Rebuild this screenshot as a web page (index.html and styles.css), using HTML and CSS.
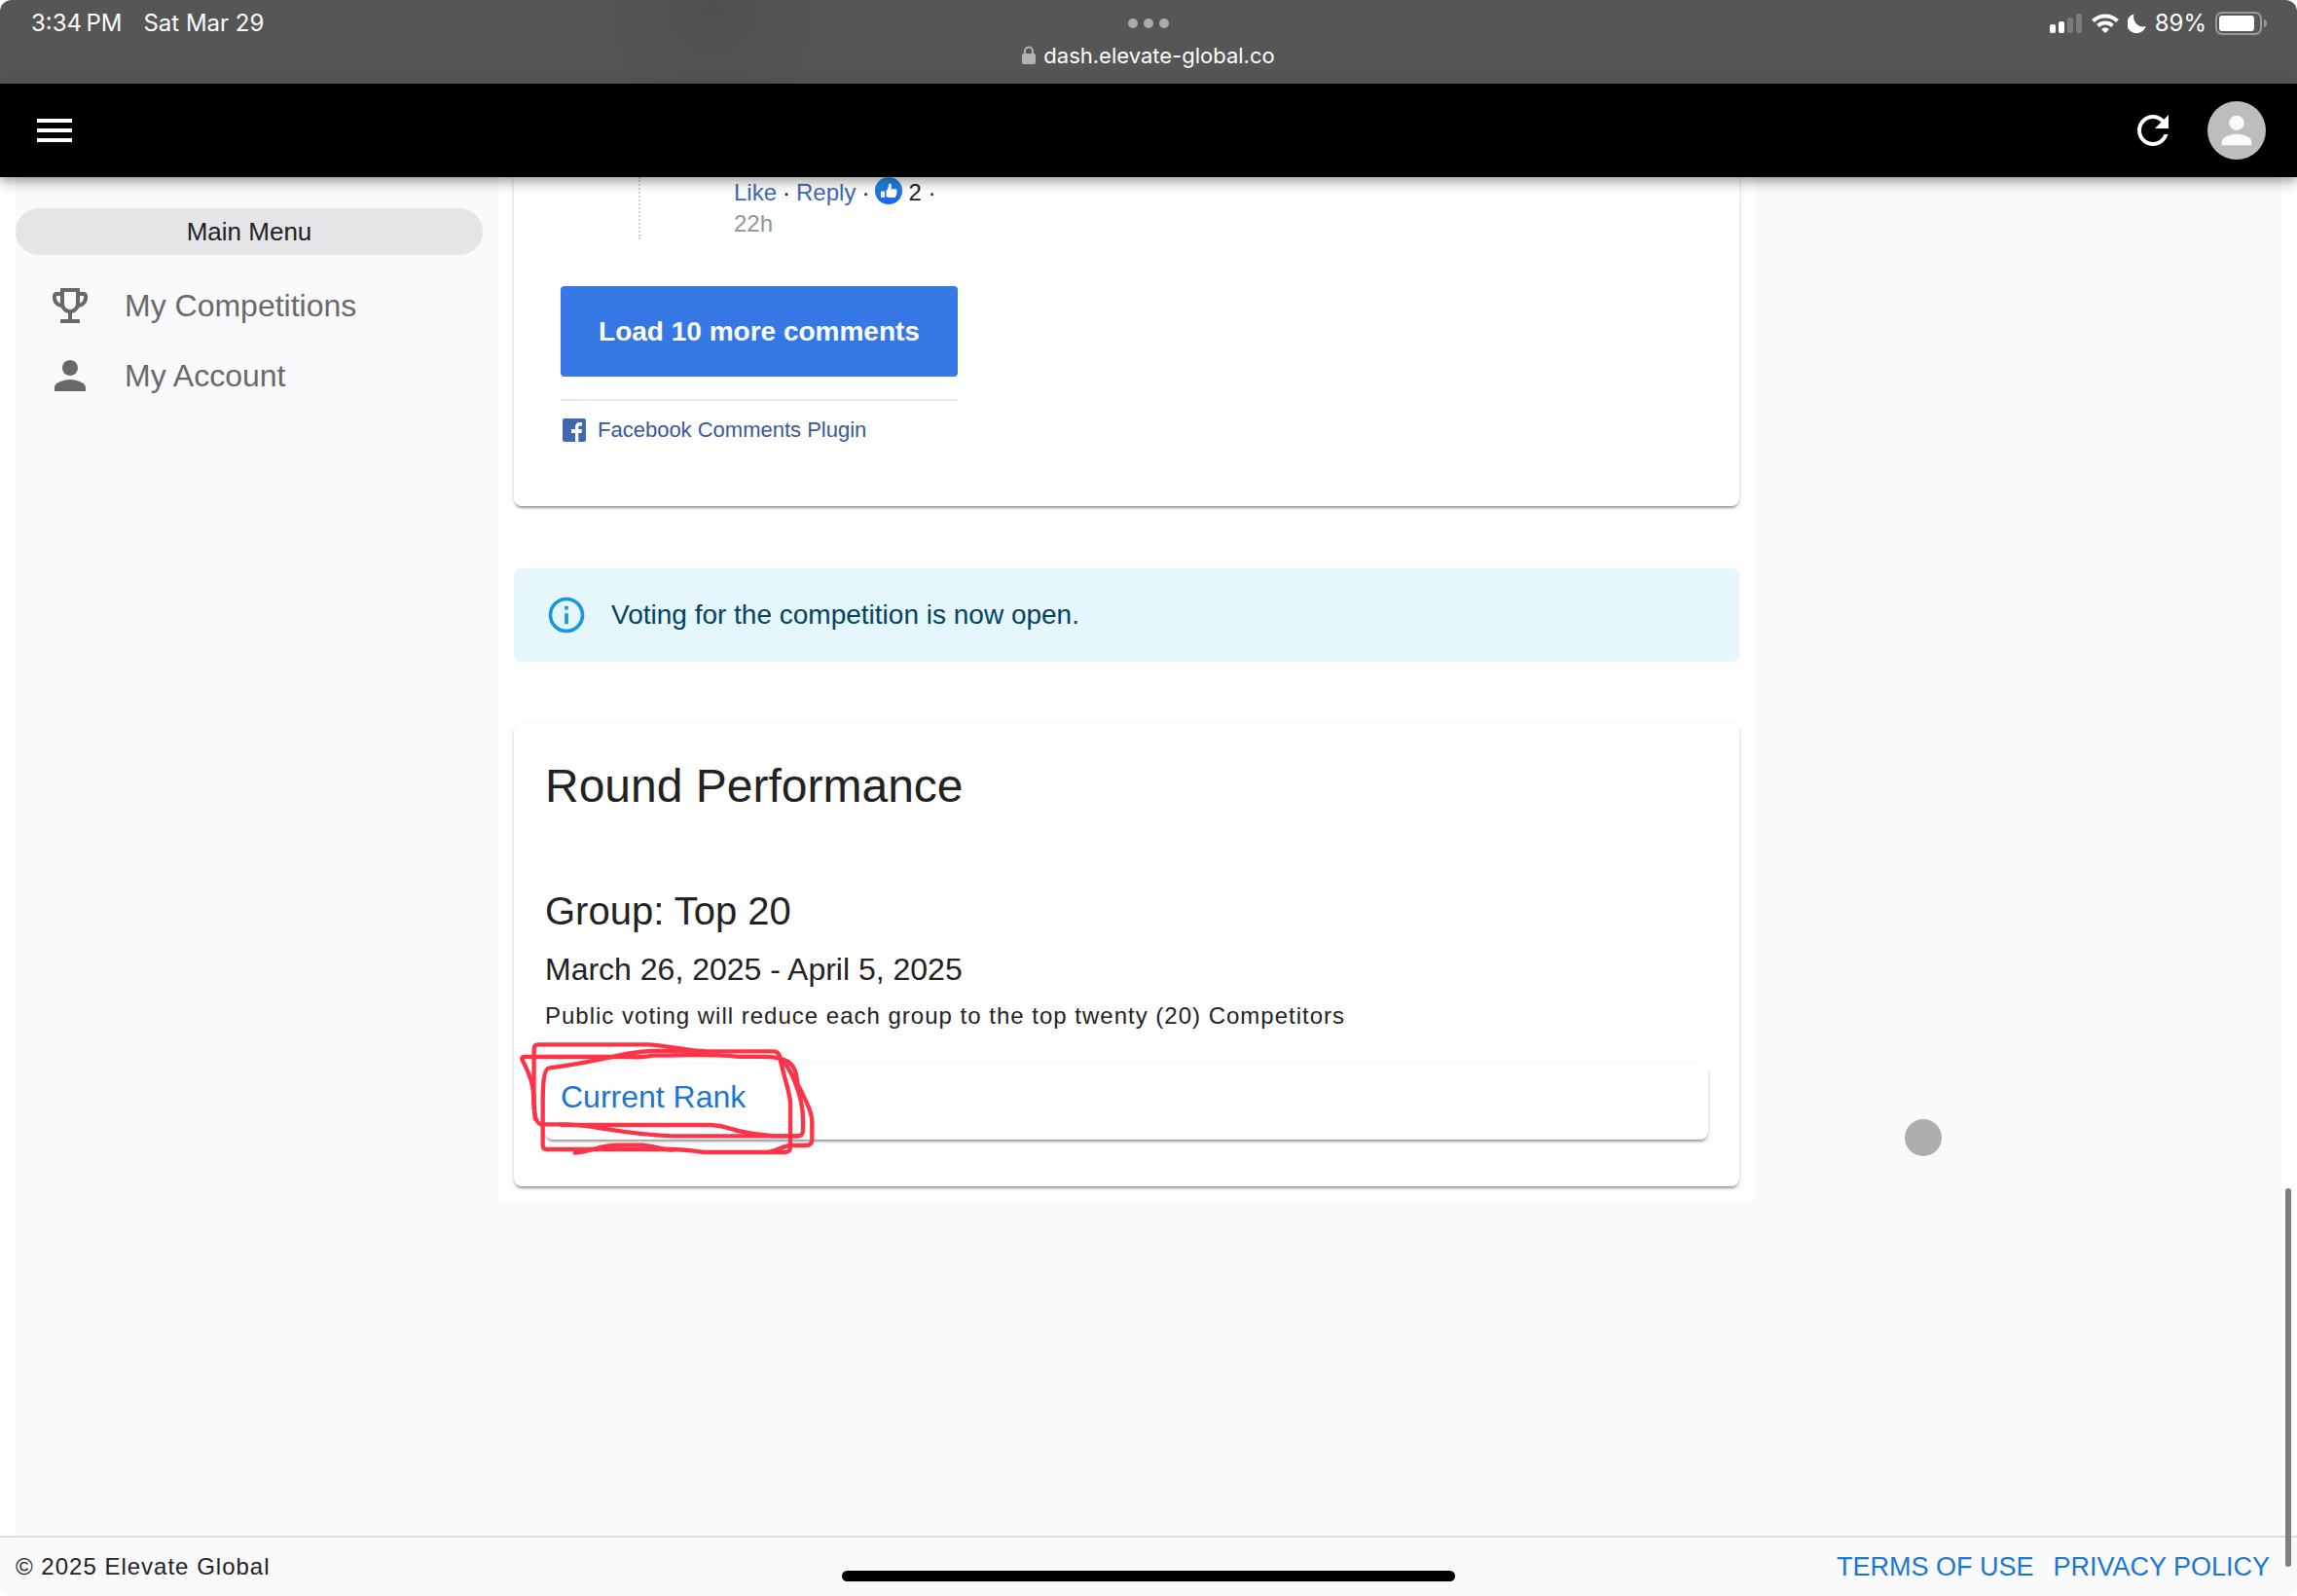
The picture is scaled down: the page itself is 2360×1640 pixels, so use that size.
FILE: index.html
```html
<!DOCTYPE html>
<html lang="en">
<head>
    <meta charset="UTF-8">
    <meta name="viewport" content="width=device-width, initial-scale=1.0">
    <title>Elevate Global</title>
    <link rel="stylesheet" href="styles.css">
</head>
<body>

    <div class="status-bar">
        <div class="status-left">
            <span>3:34&#8201;PM</span>
            <span>Sat Mar 29</span>
        </div>
        <div class="status-center">
            <div class="dots"><i></i><i></i><i></i></div>
            <div class="address">
                <svg class="lock" width="14" height="20" viewBox="0 0 14 20"><path d="M3 10V5.500a4 4 0 0 1 8 0V10" fill="none" stroke="#b3b2ba" stroke-width="2"/><rect y="8" width="14" height="11" rx="2" fill="#b3b2ba"/></svg>
                <span>dash.elevate-global.co</span>
            </div>
        </div>
        <div class="status-right">
            <svg width="34" height="20" viewBox="0 0 34 20" fill="#fff"><rect y="11" width="6" height="9" rx="2"/><rect x="9" y="8" width="6" height="12" rx="2"/><rect x="18" y="4" width="6" height="16" rx="2" fill="#7b7b7b"/><rect x="27" width="6" height="20" rx="2" fill="#7b7b7b"/></svg>
            <svg width="28" height="20" viewBox="0 0 28 20" fill="none" stroke="#fff" stroke-width="4"><path d="M1.500 7.500a18 18 0 0 1 25 0"/><path d="M6.500 12.500a11 11 0 0 1 15 0"/><path d="M14 20l-4-4a5.600 5.600 0 0 1 8 0z" fill="#fff" stroke="none"/></svg>
            <svg class="moon" width="19" height="20" viewBox="0 0 19 20" fill="#fff"><path d="M6.500 0.500A10 10 0 0 0 18.800 13 10 10 0 1 1 6.500 .500z"/></svg>
            <span>89%</span>
            <svg class="battery" width="54" height="24" viewBox="0 0 54 24"><rect x="1" y="1" width="46" height="22" rx="6" fill="none" stroke="#9a9a9a" stroke-width="2"/><rect x="4" y="4" width="36" height="16" rx="3" fill="#fff"/><path d="M50 8c4 1 4 7 0 8z" fill="#9a9a9a"/></svg>
        </div>
    </div>

    <header class="app-bar">
        <button class="icon-button" aria-label="Menu">
            <svg class="icon" viewBox="0 0 24 24"><path d="M3 18h18v-2H3v2zm0-5h18v-2H3v2zm0-7v2h18V6H3z"/></svg>
        </button>
        <div class="app-actions">
            <button class="icon-button" aria-label="Refresh">
                <svg class="icon" viewBox="0 0 24 24"><path d="M17.650 6.350C16.200 4.900 14.210 4 12 4c-4.420 0-7.990 3.580-7.990 8s3.570 8 7.990 8c3.730 0 6.840-2.550 7.730-6h-2.080c-.820 2.330-3.040 4-5.650 4-3.310 0-6-2.690-6-6s2.690-6 6-6c1.660 0 3.140.690 4.220 1.780L13 11h7V4l-2.350 2.350z"/></svg>
            </button>
            <button class="avatar" aria-label="Profile">
                <svg viewBox="0 0 24 24"><path d="M12 12c2.210 0 4-1.790 4-4s-1.790-4-4-4-4 1.790-4 4 1.790 4 4 4zm0 2c-2.670 0-8 1.340-8 4v2h16v-2c0-2.660-5.330-4-8-4z"/></svg>
            </button>
        </div>
    </header>

    <div class="content">
        <nav class="sidebar">
            <div class="menu-title">Main Menu</div>
            <a class="menu-item" href="#">
                <svg class="icon" viewBox="0 0 24 24"><path d="M19 5h-2V3H7v2H5c-1.100 0-2 .9-2 2v1c0 2.550 1.920 4.630 4.390 4.940.630 1.500 1.980 2.630 3.610 2.960V19H7v2h10v-2h-4v-3.100c1.630-.330 2.980-1.460 3.610-2.960C19.080 12.630 21 10.550 21 8V7c0-1.100-.9-2-2-2zM5 8V7h2v3.820C5.840 10.400 5 9.300 5 8zm7 6c-1.650 0-3-1.350-3-3V5h6v6c0 1.650-1.350 3-3 3zm7-6c0 1.300-.840 2.400-2 2.820V7h2v1z"/></svg>
                My Competitions
            </a>
            <a class="menu-item" href="#">
                <svg class="icon" viewBox="0 0 24 24"><path d="M12 12c2.210 0 4-1.790 4-4s-1.790-4-4-4-4 1.790-4 4 1.790 4 4 4zm0 2c-2.670 0-8 1.340-8 4v2h16v-2c0-2.660-5.330-4-8-4z"/></svg>
                My Account
            </a>
        </nav>

        <main class="main-panel">
            <section class="card comments-card">
                <div class="comments">
                    <div class="reply">
                        <div class="reply-meta">
                            <a href="#">Like</a> · <a href="#">Reply</a> ·
                            <svg class="thumb" viewBox="0 0 28 28">
                                <defs><linearGradient id="like" x1="0" y1="0" x2="0" y2="1"><stop offset="0" stop-color="#2b8fdc"/><stop offset="1" stop-color="#1463f3"/></linearGradient></defs>
                                <circle cx="14" cy="14" r="14" fill="url(#like)"/>
                                <path d="M6 15.500q0-1 1-1h2q1 0 1 1V21H7q-1 0-1-1zM11.500 14c1.800-1.500 2.200-3 2.400-6 .1-2 3.100-2 3.100 1 0 1.300-.2 2.200-.5 3.200H21c1.500 0 2 1.500 1.200 2.400.6.800.5 1.700-.2 2.400.4.900 0 1.700-.7 2.200 0 1.300-.7 1.900-2.200 1.900h-3.600c-1.700 0-2.800-.5-4-1z" fill="#fff"/>
                            </svg>
                            2 ·
                        </div>
                        <div class="reply-time">22h</div>
                    </div>
                    <button class="load-more">Load 10 more comments</button>
                    <a class="plugin" href="#">
                        <svg class="fb" viewBox="0 0 24 24"><rect width="24" height="24" rx="2" fill="#4267b2"/><path d="M13 24v-9H9v-4h4V9c0-3.500 2-5 4.500-5H20v3.500h-2c-1.300 0-1.700.6-1.700 1.800V11H20l-.5 4h-3.200v9z" fill="#fff"/></svg>
                        Facebook Comments Plugin
                    </a>
                </div>
            </section>

            <div class="alert" role="alert">
                <svg class="alert-icon" viewBox="0 0 24 24"><path d="M11 7h2v2h-2zm0 4h2v6h-2zm1-9C6.480 2 2 6.480 2 12s4.480 10 10 10 10-4.480 10-10S17.520 2 12 2zm0 18c-4.410 0-8-3.590-8-8s3.590-8 8-8 8 3.590 8 8-3.590 8-8 8z"/></svg>
                Voting for the competition is now open.
            </div>

            <section class="card round-card">
                <h1>Round Performance</h1>
                <h2>Group: Top 20</h2>
                <p class="dates">March 26, 2025 - April 5, 2025</p>
                <p class="caption">Public voting will reduce each group to the top twenty (20) Competitors</p>
                <div class="card rank-card">
                    <a href="#">Current Rank</a>
                    <svg class="scribble" viewBox="0 0 1080 600">
                        <path d="M440 108H86Q76 108 80 118C112 180 115 205 115 250Q118 316 140 316H215C300 318 380 345 540 352H925Q945 354 945 335V300C945 230 905 130 870 112C830 104 790 110 740 107C680 98 560 104 480 104Q460 109 420 109"/>
                        <path d="M120 300C113 260 116 200 116 85Q116 70 128 70H470C530 74 590 88 640 91H855Q870 91 874 110C880 150 906 220 906 250V385Q906 402 890 402H640C600 398 590 393 540 393H156Q143 393 143 380V250C143 190 146 142 164 142C320 124 400 90 480 90H640"/>
                        <path d="M870 112C915 120 925 150 928 190C960 255 973 280 973 310V365Q971 381 955 381H905C880 385 860 398 838 402"/>
                        <path d="M242 404C300 400 310 380 380 380H450C490 384 510 393 545 395"/>
                        <path d="M200 318H660C730 320 710 342 860 352H930"/>
                    </svg>
                </div>
            </section>
        </main>
    </div>

    <footer class="footer">
        <span class="caption">© 2025 Elevate Global</span>
        <div class="footer-links">
            <a href="#">TERMS OF USE</a>
            <a href="#">PRIVACY POLICY</a>
        </div>
    </footer>

    <div class="home-indicator"></div>
    <div class="scroll-thumb"></div>
    <div class="pointer"></div>

</body>
</html>
```
FILE: styles.css
```css
:root {
    --font-sans: Helvetica, "Liberation Sans", Arial, sans-serif;
    --font-system: Inter, "Liberation Sans", sans-serif;
    --surface: #fafafc;
    --text-color: #222222;
    --text-secondary: #69696b;
    --link-color: #1976d2;
    --card-shadow: 0 4px 2px -2px rgba(0, 0, 0, 0.2), 0 2px 2px rgba(0, 0, 0, 0.14), 0 2px 6px rgba(0, 0, 0, 0.12);
}

* { box-sizing: border-box; }

body {
    margin: 0;
    min-height: 100vh;
    display: flex;
    flex-direction: column;
    background-color: #ffffff;
    font-family: var(--font-sans);
    color: var(--text-color);
}

a { color: var(--link-color); text-decoration: none; }
h1, h2, p { margin: 0; font-weight: 400; }
svg { flex-shrink: 0; }

button {
    padding: 0;
    border: none;
    background: none;
    font-family: inherit;
    cursor: pointer;
}

/* Device status bar */
.status-bar {
    height: 86px;
    display: grid;
    grid-template-columns: 1fr auto 1fr;
    padding: 0 30px;
    border-radius: 12px 12px 0 0;
    background: radial-gradient(circle at 31% 10px, #4d4f51, #565656 130px);
    font-family: var(--font-system);
    font-size: 24px;
    line-height: 32px;
    color: #ffffff;
}

.status-left {
    display: flex;
    gap: 22px;
    padding: 8px 0 0 2px;
}

.status-center { text-align: center; }

.dots {
    display: flex;
    justify-content: center;
    gap: 6px;
    padding-top: 19px;
}
.dots i {
    width: 10px;
    height: 10px;
    border-radius: 50%;
    background-color: #ababab;
}

.address {
    display: flex;
    align-items: center;
    gap: 8px;
    padding-top: 12px;
    font-size: 22px;
}

.status-right {
    display: flex;
    justify-content: flex-end;
    align-items: center;
    gap: 9px;
    height: 48px;
}

/* App bar */
.app-bar {
    position: relative;
    z-index: 2;
    height: 96px;
    display: flex;
    align-items: center;
    justify-content: space-between;
    padding: 0 32px;
    background-color: #000000;
    box-shadow: 0 4px 8px -2px rgba(0, 0, 0, 0.2), 0 8px 10px rgba(0, 0, 0, 0.14), 0 2px 20px rgba(0, 0, 0, 0.12);
}

.app-actions {
    display: flex;
    align-items: center;
    gap: 32px;
}

.icon { width: 48px; height: 48px; fill: currentColor; }
.icon-button { height: 48px; color: #ffffff; }

.avatar {
    width: 60px;
    height: 60px;
    display: flex;
    align-items: center;
    justify-content: center;
    border-radius: 50%;
    background-color: #bdbdbd;
}
.avatar svg { width: 46px; height: 46px; fill: var(--surface); }

/* Page */
.content {
    flex: 1;
    display: grid;
    grid-template-columns: 496px 31fr 13fr;
    align-items: start;
    margin: 0 16px;
    background-color: var(--surface);
}

.sidebar { padding: 32px 16px 0 0; }

.menu-title {
    margin-bottom: 16px;
    border-radius: 24px;
    background-color: #e5e5e7;
    font-size: 26px;
    line-height: 48px;
    text-align: center;
}

.menu-item {
    display: flex;
    align-items: center;
    gap: 32px;
    height: 72px;
    padding: 0 32px;
    font-size: 32px;
    color: var(--text-secondary);
}

.main-panel {
    padding: 0 16px 16px;
    border-radius: 0 0 8px 8px;
    background-color: #ffffff;
}

.card {
    border-radius: 8px;
    background-color: #ffffff;
    box-shadow: var(--card-shadow);
}

.comments-card {
    padding: 0 48px 62px;
    border-radius: 0 0 8px 8px;
}

.comments { width: 408px; }

.reply {
    margin-bottom: 48px;
    margin-left: 80px;
    padding-left: 96px;
    border-left: 2px dotted #d0d0d2;
    font-size: 24px;
    line-height: 32px;
    color: #1c1e21;
}
.reply-meta {
    display: flex;
    gap: 6px;
    height: 32px;
}
.reply-meta a { color: #4267b2; }
.reply-time { color: #90949c; }
.thumb { width: 28px; height: 28px; }

.load-more {
    width: 100%;
    height: 93px;
    border-radius: 4px;
    background-color: #3578e5;
    font-size: 28px;
    font-weight: 700;
    color: #ffffff;
}

.plugin {
    display: flex;
    align-items: center;
    gap: 12px;
    margin-top: 23px;
    padding: 14px 2px 0;
    border-top: 2px solid #e9ebee;
    font-size: 22px;
    line-height: 32px;
    color: #385898;
}
.fb { width: 24px; height: 24px; }

.alert {
    display: flex;
    align-items: center;
    gap: 24px;
    height: 96px;
    margin: 64px 0;
    padding: 0 32px;
    border-radius: 8px;
    background-color: #e5f6fd;
    font-size: 28px;
    color: #014361;
}
.alert-icon { width: 44px; height: 44px; fill: #1a97dc; }

.round-card { padding: 32px 32px 48px; }
.round-card h1 { margin-bottom: 64px; font-size: 48px; line-height: 64px; }
.round-card h2 { font-size: 40px; line-height: 64px; }
.dates { font-size: 32px; line-height: 56px; }

.caption {
    font-size: 24px;
    line-height: 40px;
    letter-spacing: 1px;
}

.rank-card {
    position: relative;
    margin-top: 30px;
    padding: 9px 16px 20px;
    font-size: 32px;
    line-height: 48px;
}

/* Hand-drawn mark over the rank link */
.scribble {
    position: absolute;
    top: -44px;
    left: -50px;
    width: 360px;
    height: 200px;
    fill: none;
    stroke: #ff3347;
    stroke-width: 13px;
    stroke-linecap: round;
    stroke-linejoin: round;
    pointer-events: none;
}

.footer {
    display: flex;
    align-items: center;
    justify-content: space-between;
    height: 62px;
    padding: 0 28px 0 16px;
    border-top: 2px solid #dedee0;
    border-radius: 0 0 12px 12px;
    background-color: var(--surface);
}
.footer-links {
    display: flex;
    gap: 20px;
    font-size: 27px;
}

/* Overlays */
.home-indicator {
    position: fixed;
    z-index: 3;
    bottom: 15px;
    left: 50%;
    width: 630px;
    height: 11px;
    margin-left: -315px;
    border-radius: 6px;
    background-color: #000000;
}

.scroll-thumb {
    position: fixed;
    z-index: 3;
    right: 6px;
    bottom: 30px;
    width: 6px;
    height: 389px;
    border-radius: 3px;
    background-color: #7f7f80;
}

.pointer {
    position: fixed;
    top: 1150px;
    right: 365px;
    width: 38px;
    height: 38px;
    border-radius: 50%;
    background-color: #aeaeb0;
}
```
